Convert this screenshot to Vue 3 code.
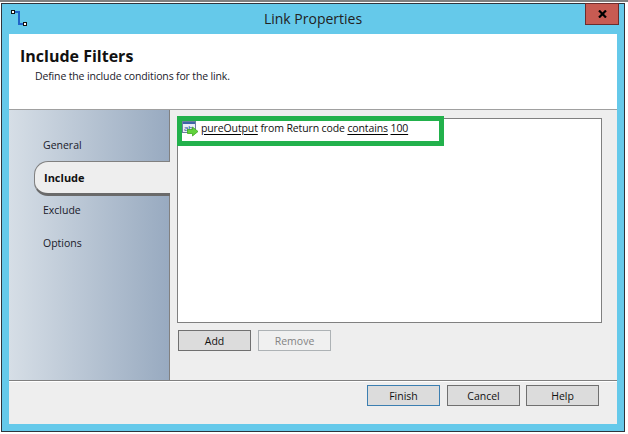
<template>
  <div class="screen">
    <div class="window">
      <div class="titlebar">
        <svg class="app-icon" width="18" height="18" viewBox="0 0 18 18">
          <path d="M5 2H10V14H15" fill="none" stroke="#1f64c8" stroke-width="2" />
          <rect x="2.5" y="0.5" width="3" height="3" fill="#fff" stroke="#111" />
          <rect x="14.5" y="12.5" width="3" height="3" fill="#fff" stroke="#111" />
        </svg>
        <span class="title">Link Properties</span>
        <button class="close">
          <svg width="9" height="8" viewBox="0 0 9 8">
            <path d="M1 .5L8 7.5M8 .5L1 7.5" stroke="#000" stroke-width="2.2" fill="none" />
          </svg>
        </button>
      </div>
      <div class="client">
        <header class="head">
          <h1>Include Filters</h1>
          <p>Define the include conditions for the link.</p>
        </header>
        <div class="body">
          <nav class="side">
            <div
              v-for="t in tabs"
              :key="t"
              class="tab"
              :class="{ active: t === 'Include' }"
            >{{ t }}</div>
          </nav>
          <main class="content">
            <div class="listbox">
              <div class="row">
                <svg class="row-icon" width="17" height="16" viewBox="0 0 17 16">
                  <rect x="0.5" y="0.5" width="13" height="11" fill="#e8eef8" stroke="#6d7f9e" />
                  <rect x="1" y="1" width="12" height="2" fill="#3f64a8" />
                  <text x="2" y="9.5" font-size="8" fill="#2f55a0" font-family="Liberation Sans, sans-serif">ab</text>
                  <path d="M5.5 8.5H10.5V6L16 10.5L10.5 15V12.5H5.5Z" fill="#62d23c" stroke="#3ea822" stroke-width="0.8" />
                </svg>
                <span><u>pureOutput</u> from Return code <u>contains</u> <u>100</u></span>
              </div>
              <div class="highlight"></div>
            </div>
            <div class="list-actions">
              <button class="btn">Add</button>
              <button class="btn disabled">Remove</button>
            </div>
          </main>
        </div>
        <footer class="foot">
          <button class="btn primary">Finish</button>
          <button class="btn">Cancel</button>
          <button class="btn help">Help</button>
        </footer>
      </div>
    </div>
  </div>
</template>

<script setup>
const tabs = ['General', 'Include', 'Exclude', 'Options']
</script>

<style>
html, body { margin: 0; background: #fff; }
</style>

<style scoped>
.screen {
  width: 628px;
  height: 434px;
  padding: 1px 3px 2px 1px;
  border-top: 2px solid #808080;
  box-sizing: border-box;
  overflow: hidden;
  font-family: "Open Sans", "Noto Sans", sans-serif;
  color: #111;
}
.window {
  height: 100%;
  box-sizing: border-box;
  border: 1px solid #30343c;
  background: #65c9ea;
  padding: 0 7px 7px;
  display: flex;
  flex-direction: column;
}
.titlebar {
  height: 30px;
  flex: none;
  display: grid;
  grid-template-columns: 1fr auto 1fr;
  align-items: start;
}
.app-icon { margin: 6px 0 0 0; }
.title {
  font-size: 14px;
  line-height: 30px;
  color: #222;
}
.close {
  justify-self: end;
  width: 34px;
  height: 22px;
  margin: -1px -2px 0 0;
  padding: 0;
  border: 1px solid #6b2d2d;
  background: #c75b52;
  display: flex;
  align-items: center;
  justify-content: center;
}
.client {
  flex: 1;
  min-height: 0;
  background: #eee;
  display: flex;
  flex-direction: column;
}
.head {
  height: 76px;
  flex: none;
  box-sizing: border-box;
  background: #fff;
  border-bottom: 1px solid #a0a0a0;
  padding: 12px 0 0 11px;
}
.head h1 {
  margin: 0;
  font-size: 16px;
  line-height: 20px;
  font-weight: 700;
  color: #111;
}
.head p {
  margin: 3px 0 0 15px;
  font-size: 10.5px;
  letter-spacing: -0.15px;
  line-height: 15px;
  color: #1a1a2a;
}
.body {
  height: 270px;
  flex: none;
  display: flex;
  border-bottom: 1px solid #808080;
  box-shadow: 0 1px 0 #fff;
}
.side {
  width: 161px;
  flex: none;
  box-sizing: border-box;
  padding-top: 18px;
  border-right: 1px solid #808080;
  background: linear-gradient(90deg, #d6dee6, #98aac0);
  display: flex;
  flex-direction: column;
}
.tab {
  height: 33px;
  flex: none;
  line-height: 33px;
  padding-left: 34px;
  font-size: 10.5px;
  color: #1a1a2a;
}
.tab:first-child {
  height: 32px;
  padding-top: 1px;
}
.tab.active {
  height: 35px;
  line-height: 32px;
  box-sizing: border-box;
  margin: 0 -1px -2px 25px;
  padding-left: 9px;
  background: #eee;
  border: 1px solid #808080;
  border-bottom: 3px solid #6a6a6a;
  border-right: 0;
  border-radius: 14px 0 0 14px;
  font-size: 11px;
  font-weight: 700;
  color: #111;
  position: relative;
}
.content {
  flex: 1;
  box-sizing: border-box;
  padding: 8px 15px 0 7px;
  display: flex;
  flex-direction: column;
}
.listbox {
  height: 205px;
  flex: none;
  box-sizing: border-box;
  border: 1px solid #808080;
  background: #fff;
  position: relative;
}
.row {
  display: flex;
  align-items: center;
  height: 18px;
  padding-left: 4px;
  font-size: 10.5px;
  letter-spacing: -0.12px;
  color: #111;
}
.row-icon { flex: none; margin: 2px 2px 0 0; }
.row u {
  text-decoration-color: #000;
  text-decoration-thickness: 1px;
  text-underline-offset: 2px;
}
.highlight {
  position: absolute;
  left: -1px;
  top: -3px;
  width: 267px;
  height: 30px;
  box-sizing: border-box;
  border: 5px solid #22b14c;
}
.list-actions {
  display: flex;
  gap: 7px;
  margin-top: 7px;
  padding-left: 1px;
}
.btn {
  width: 73px;
  height: 21px;
  padding: 0;
  box-sizing: border-box;
  border: 1px solid #707070;
  background: #dcdcdc;
  font: 10.5px "Open Sans", "Noto Sans", sans-serif;
  color: #111;
}
.btn.disabled {
  border-color: #adb2b5;
  background: #f0f0f0;
  color: #838383;
}
.btn.primary { border-color: #3c7fb1; }
.foot {
  flex: 1;
  display: flex;
  gap: 7px;
  padding: 4px 18px 0 0;
  justify-content: flex-end;
  align-items: flex-start;
}
.btn.help { margin-left: -1px; }
</style>
